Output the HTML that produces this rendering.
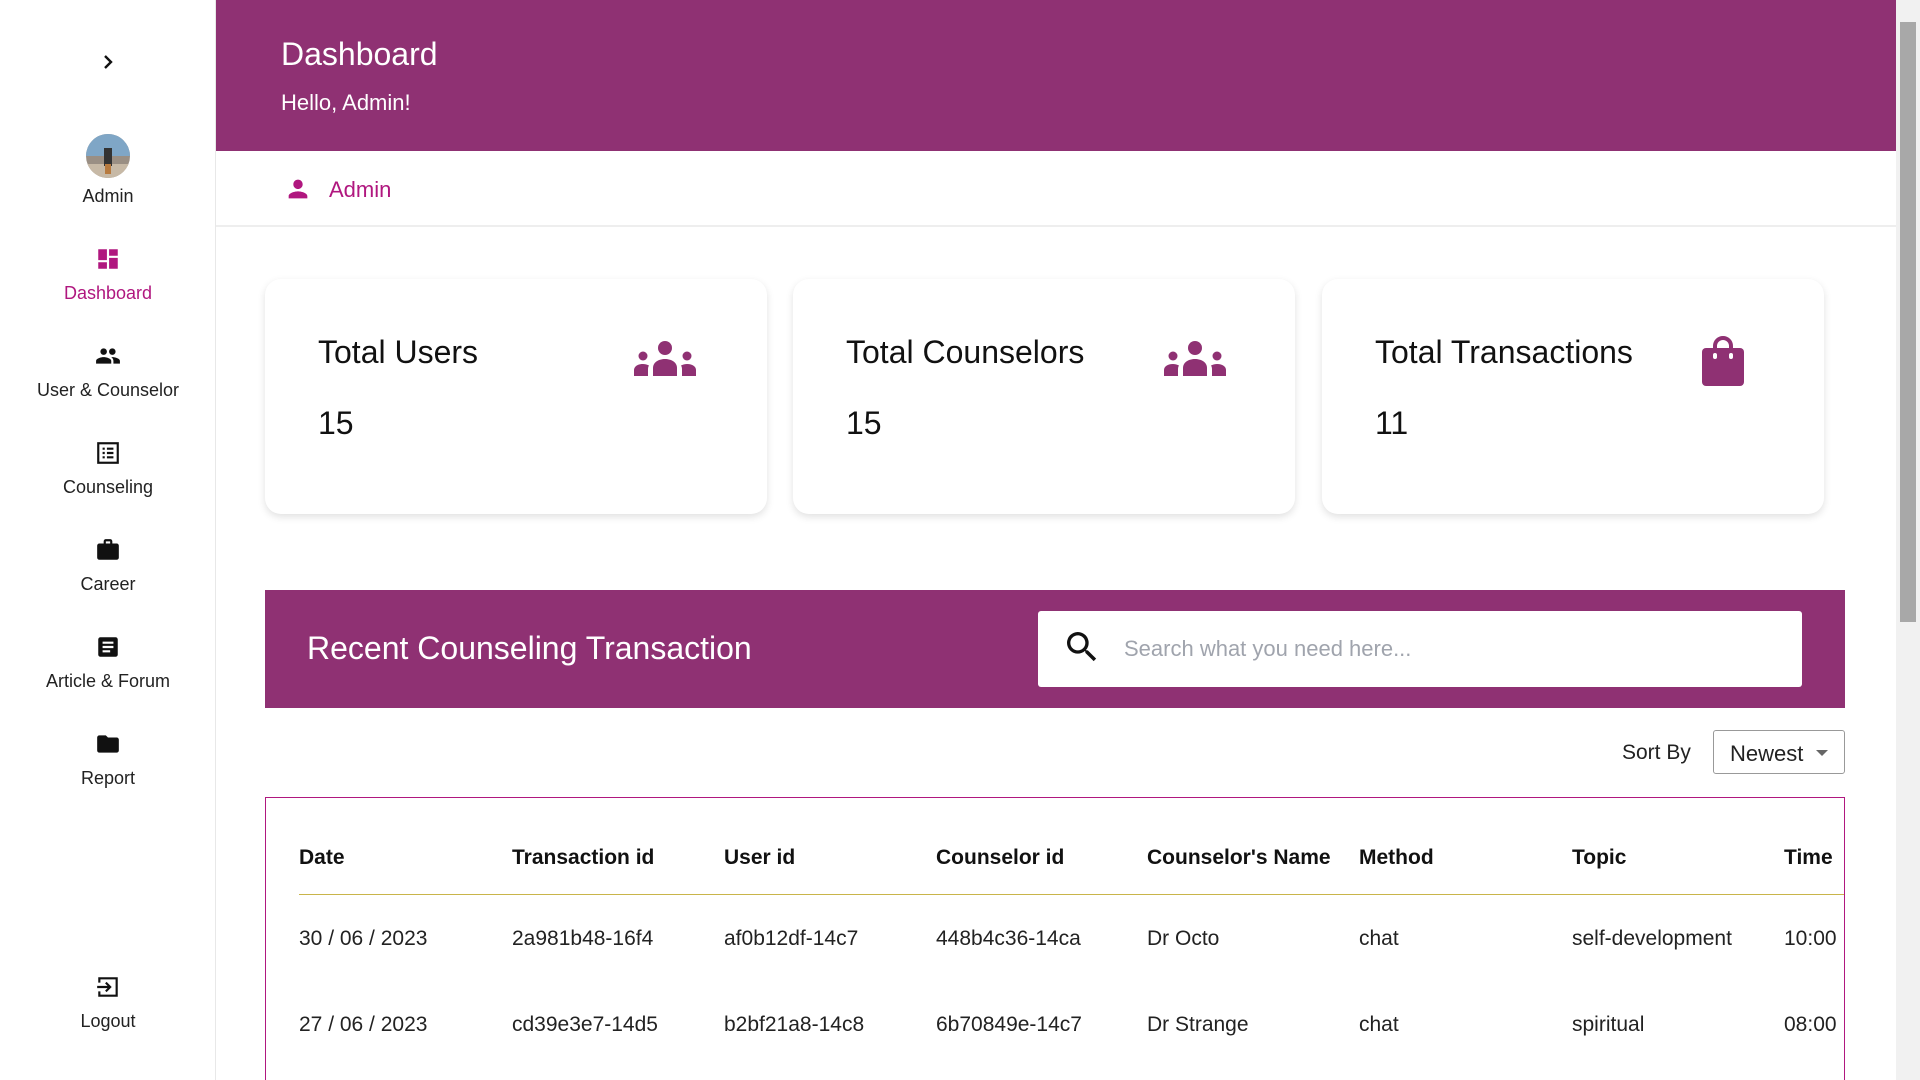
<!DOCTYPE html>
<html><head><style>
*{margin:0;padding:0;box-sizing:border-box}
html,body{width:1920px;height:1080px;overflow:hidden}
body{background:#fff;font-family:"Liberation Sans",Arial,sans-serif;position:relative;color:#111}
.side{position:absolute;left:0;top:0;width:216px;height:1080px;border-right:1px solid #e8e8e8;background:#fff}
.item{position:absolute;left:0;width:216px;text-align:center;font-size:18px;color:#222}
.item svg{display:block;margin:0 auto 11px}
.hdr{position:absolute;left:216px;top:0;width:1680px;height:151px;background:#8f3173;color:#fff}
.hdr h1{position:absolute;left:65px;top:36px;font-size:32px;font-weight:normal}
.hdr p{position:absolute;left:65px;top:90px;font-size:22px}
.bar{position:absolute;left:216px;top:151px;width:1680px;height:76px;border-bottom:2px solid #eee}
.bar span{position:absolute;left:113px;top:26px;font-size:22px;color:#b0177f}
.card{position:absolute;top:279px;width:502px;height:235px;background:#fff;border-radius:16px;box-shadow:0 3px 8px rgba(0,0,0,.12)}
.card .t{position:absolute;left:53px;top:55px;font-size:32px;color:#111}
.card .n{position:absolute;left:53px;top:126px;font-size:32px;color:#111}
.card svg{position:absolute}
.ban{position:absolute;left:265px;top:590px;width:1580px;height:118px;background:#8f3173}
.ban h2{position:absolute;left:42px;top:40px;font-size:32px;font-weight:normal;color:#fff}
.search{position:absolute;left:773px;top:21px;width:764px;height:76px;background:#fff;border-radius:3px}
.search span{position:absolute;left:86px;top:25px;font-size:22px;color:#a0a4ad}
.sort{position:absolute;left:1622px;top:741px;font-size:21px;color:#222}
.dd{position:absolute;left:1713px;top:730px;width:132px;height:44px;border:1px solid #999;border-radius:3px;font-size:22px;color:#222;padding:10px 0 0 16px}
.dd i{position:absolute;right:16px;top:19px;border:6px solid transparent;border-top:6px solid #666}
.tbl{position:absolute;left:265px;top:797px;width:1580px;height:283px;border:1px solid #b0177f;border-bottom:none;overflow:hidden}
.c{position:absolute;font-size:21px;color:#222;white-space:nowrap}
.h{font-weight:bold;color:#111}
.line{position:absolute;left:33px;top:96px;width:1560px;height:1px;background:#c9b54a}
.sb{position:absolute;left:1896px;top:0;width:24px;height:1080px;background:#f1f1f1}
.sb div{position:absolute;left:4px;top:22px;width:16px;height:600px;background:#a8a8a8}
</style></head><body>
<div class="side">
 <div class="item" style="top:50px"><svg width="24" height="24" viewBox="0 0 24 24"><path d="M9 6l6 6-6 6" stroke="#111" stroke-width="2.4" fill="none"/></svg></div>
 <div class="item" style="top:134px"><svg width="44" height="44" viewBox="0 0 44 44" style="margin-bottom:8px"><defs><clipPath id="cc"><circle cx="22" cy="22" r="22"/></clipPath></defs><g clip-path="url(#cc)"><rect width="44" height="44" fill="#9a8f84"/><rect width="44" height="22" fill="#7fa6c6"/><rect x="0" y="30" width="44" height="14" fill="#c7b9a6"/><rect x="18" y="14" width="8" height="18" fill="#333"/><rect x="19" y="30" width="6" height="10" fill="#b77a3f"/></g></svg>Admin</div>
 <div class="item" style="top:246px;color:#b0177f"><svg width="26" height="26" viewBox="0 0 24 24"><path fill="#b0177f" d="M3 13h8V3H3v10zm0 8h8v-6H3v6zm10 0h8V11h-8v10zm0-18v6h8V3h-8z"/></svg>Dashboard</div>
 <div class="item" style="top:343px"><svg width="30" height="26" viewBox="0 0 24 24"><path fill="#111" d="M16 11c1.66 0 2.99-1.34 2.99-3S17.66 5 16 5c-1.660 0-3 1.34-3 3s1.34 3 3 3zm-8 0c1.66 0 2.99-1.34 2.99-3S9.66 5 8 5C6.34 5 5 6.34 5 8s1.34 3 3 3zm0 2c-2.33 0-7 1.17-7 3.5V19h14v-2.5c0-2.33-4.67-3.5-7-3.5zm8 0c-.29 0-.62.02-.97.05 1.16.84 1.970 1.97 1.97 3.45V19h6v-2.5c0-2.33-4.67-3.5-7-3.5z"/></svg>User &amp; Counselor</div>
 <div class="item" style="top:440px"><svg width="26" height="26" viewBox="0 0 24 24"><rect x="3" y="3" width="18" height="18" fill="none" stroke="#111" stroke-width="2"/><path fill="#111" d="M7 7h2v2H7zm4 0h6v2h-6zM7 11h2v2H7zm4 0h6v2h-6zM7 15h2v2H7zm4 0h6v2h-6z"/></svg>Counseling</div>
 <div class="item" style="top:537px"><svg width="26" height="26" viewBox="0 0 24 24"><path fill="#111" d="M20 6h-4V4c0-1.1-.9-2-2-2h-4c-1.1 0-2 .9-2 2v2H4c-1.1 0-2 .9-2 2v11c0 1.1.9 2 2 2h16c1.1 0 2-.9 2-2V8c0-1.1-.9-2-2-2zm-6 0h-4V4h4v2z"/></svg>Career</div>
 <div class="item" style="top:634px"><svg width="26" height="26" viewBox="0 0 24 24"><path fill="#111" d="M19 3H5c-1.1 0-2 .9-2 2v14c0 1.1.9 2 2 2h14c1.1 0 2-.9 2-2V5c0-1.1-.9-2-2-2zm-5 14H7v-2h7v2zm3-4H7v-2h10v2zm0-4H7V7h10v2z"/></svg>Article &amp; Forum</div>
 <div class="item" style="top:731px"><svg width="28" height="26" viewBox="0 0 24 24"><path fill="#111" d="M10 4H4c-1.1 0-2 .9-2 2v12c0 1.1.9 2 2 2h16c1.1 0 2-.9 2-2V8c0-1.1-.9-2-2-2h-8l-2-2z"/></svg>Report</div>
 <div class="item" style="top:974px"><svg width="26" height="26" viewBox="0 0 24 24"><path fill="none" stroke="#111" stroke-width="2" d="M4 8V4h16v16H4v-4"/><path fill="none" stroke="#111" stroke-width="2" d="M2 12h11M10 8l4 4-4 4"/></svg>Logout</div>
</div>
<div class="hdr"><h1>Dashboard</h1><p>Hello, Admin!</p></div>
<div class="bar"><svg style="position:absolute;left:68px;top:24px" width="28" height="28" viewBox="0 0 24 24"><path fill="#b0177f" d="M12 12c2.21 0 4-1.79 4-4s-1.79-4-4-4-4 1.79-4 4 1.79 4 4 4zm0 2c-2.67 0-8 1.34-8 4v2h16v-2c0-2.66-5.33-4-8-4z"/></svg><span>Admin</span></div>
<div class="card" style="left:265px"><div class="t">Total Users</div><div class="n">15</div><svg style="left:368px;top:61px" width="64" height="36" viewBox="0 0 64 36"><g fill="#8f3173"><circle cx="32" cy="8" r="7"/><circle cx="10" cy="16" r="4.5"/><circle cx="54" cy="16" r="4.5"/><path d="M20 36v-8c0-6 6-9 12-9s12 3 12 9v8z"/><path d="M1 36v-6c0-3 3-6 9-6 2 0 4 .5 6 1.5-1 1.5-1 3-1 4.5v6z"/><path d="M63 36v-6c0-3-3-6-9-6-2 0-4 .5-6 1.5 1 1.5 1 3 1 4.5v6z"/></g></svg></div>
<div class="card" style="left:793px"><div class="t">Total Counselors</div><div class="n">15</div><svg style="left:370px;top:61px" width="64" height="36" viewBox="0 0 64 36"><g fill="#8f3173"><circle cx="32" cy="8" r="7"/><circle cx="10" cy="16" r="4.5"/><circle cx="54" cy="16" r="4.5"/><path d="M20 36v-8c0-6 6-9 12-9s12 3 12 9v8z"/><path d="M1 36v-6c0-3 3-6 9-6 2 0 4 .5 6 1.5-1 1.5-1 3-1 4.5v6z"/><path d="M63 36v-6c0-3-3-6-9-6-2 0-4 .5-6 1.5 1 1.5 1 3 1 4.5v6z"/></g></svg></div>
<div class="card" style="left:1322px"><div class="t">Total Transactions</div><div class="n">11</div><svg style="left:380px;top:55px" width="42" height="52" viewBox="0 0 42 52"><path fill="#8f3173" d="M4 14h34a4 4 0 0 1 4 4v30a4 4 0 0 1-4 4H4a4 4 0 0 1-4-4V18a4 4 0 0 1 4-4z"/><path d="M13 20v-8a8 8 0 0 1 16 0v8" fill="none" stroke="#8f3173" stroke-width="4"/><rect x="11" y="19" width="4" height="6" rx="2" fill="#fff"/><rect x="27" y="19" width="4" height="6" rx="2" fill="#fff"/></svg></div>
<div class="ban"><h2>Recent Counseling Transaction</h2><div class="search"><svg style="position:absolute;left:24px;top:16px" width="40" height="40" viewBox="0 0 24 24"><path fill="#111" d="M15.5 14h-.79l-.28-.27A6.47 6.47 0 0 0 16 9.5 6.5 6.5 0 1 0 9.5 16c1.61 0 3.09-.59 4.230-1.57l.27.28v.79l5 4.99L20.49 19l-4.99-5zm-6 0C7.01 14 5 11.99 5 9.5S7.01 5 9.5 5 14 7.01 14 9.5 11.99 14 9.5 14z"/></svg><span>Search what you need here...</span></div></div>
<div class="sort">Sort By</div>
<div class="dd">Newest<i></i></div>
<div class="tbl">
 <div class="c h" style="left:33px;top:48px">Date</div>
 <div class="c h" style="left:246px;top:48px">Transaction id</div>
 <div class="c h" style="left:458px;top:48px">User id</div>
 <div class="c h" style="left:670px;top:48px">Counselor id</div>
 <div class="c h" style="left:881px;top:48px">Counselor's Name</div>
 <div class="c h" style="left:1093px;top:48px">Method</div>
 <div class="c h" style="left:1306px;top:48px">Topic</div>
 <div class="c h" style="left:1518px;top:48px">Time</div>
 <div class="line"></div>
 <div class="c" style="left:33px;top:129px">30 / 06 / 2023</div>
 <div class="c" style="left:246px;top:129px">2a981b48-16f4</div>
 <div class="c" style="left:458px;top:129px">af0b12df-14c7</div>
 <div class="c" style="left:670px;top:129px">448b4c36-14ca</div>
 <div class="c" style="left:881px;top:129px">Dr Octo</div>
 <div class="c" style="left:1093px;top:129px">chat</div>
 <div class="c" style="left:1306px;top:129px">self-development</div>
 <div class="c" style="left:1518px;top:129px">10:00</div>
 <div class="c" style="left:33px;top:215px">27 / 06 / 2023</div>
 <div class="c" style="left:246px;top:215px">cd39e3e7-14d5</div>
 <div class="c" style="left:458px;top:215px">b2bf21a8-14c8</div>
 <div class="c" style="left:670px;top:215px">6b70849e-14c7</div>
 <div class="c" style="left:881px;top:215px">Dr Strange</div>
 <div class="c" style="left:1093px;top:215px">chat</div>
 <div class="c" style="left:1306px;top:215px">spiritual</div>
 <div class="c" style="left:1518px;top:215px">08:00</div>
</div>
<div class="sb"><div></div></div>
</body></html>
